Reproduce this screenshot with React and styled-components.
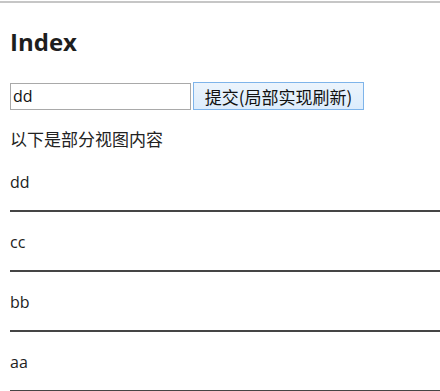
import React from 'react'
import styled, { createGlobalStyle } from 'styled-components'

const GlobalStyle = createGlobalStyle`
  body {
    margin: 0;
    background: #fff;
    font-family: "Open Sans", "Noto Sans CJK SC", sans-serif;
    color: #222;
  }
`

const Page = styled.div`
  border-top: 2px solid #c6c6c6;
  margin-top: 1px;
  padding: 0 0 0 10px;
`

const Title = styled.h2`
  margin: 23px 0 0;
  font-size: 24px;
  line-height: 32px;
  font-weight: 700;
  color: #1e1e1e;
`

const Form = styled.form`
  display: flex;
  align-items: center;
  gap: 2px;
  margin-top: 24px;
`

const TextBox = styled.input`
  box-sizing: border-box;
  width: 181px;
  height: 27px;
  margin: 0;
  padding: 0 2px;
  border: 1px solid #a9a9a9;
  font-family: "Open Sans", "Noto Sans CJK SC", sans-serif;
  font-size: 16px;
  color: #111;
  outline: none;
`

const Submit = styled.button`
  box-sizing: border-box;
  width: 171px;
  height: 28px;
  margin: 0;
  padding: 0;
  border: 1px solid #7eb4ea;
  background: linear-gradient(#ecf4fc, #dcecfc);
  font-family: "Noto Sans CJK SC", sans-serif;
  font-size: 17px;
  color: #111;
`

const Note = styled.p`
  margin: 16px 0 0;
  font-size: 17px;
  line-height: 26px;
  font-family: "Noto Sans CJK SC", sans-serif;
`

const List = styled.div`
  margin-top: 13px;
`

const Item = styled.div`
  font-size: 16px;
  line-height: 24px;
  padding-top: 5px;
  padding-bottom: 16px;
  border-bottom: 2px solid #454545;
  & + & {
    margin-top: 13px;
  }
`

const items = ['dd', 'cc', 'bb', 'aa']

export default function App() {
  return (
    <>
      <GlobalStyle />
      <Page>
        <Title>Index</Title>
        <Form onSubmit={e => e.preventDefault()}>
          <TextBox defaultValue="dd" />
          <Submit type="submit">提交(局部实现刷新)</Submit>
        </Form>
        <Note>以下是部分视图内容</Note>
        <List>
          {items.map(t => (
            <Item key={t}>{t}</Item>
          ))}
        </List>
      </Page>
    </>
  )
}
